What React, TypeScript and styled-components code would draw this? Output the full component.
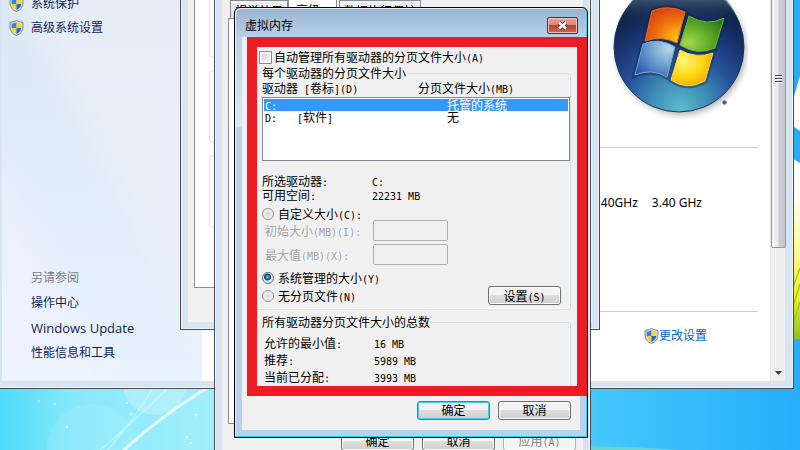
import React from 'react';
import styled, { createGlobalStyle, css } from 'styled-components';

const GlobalStyle = createGlobalStyle`
  *, *::before, *::after { box-sizing: border-box; }
  body {
    margin: 0;
    font-family: "Noto Sans", "Noto Sans CJK SC", sans-serif;
    font-size: 12px;
    color: #000;
  }
  button, input { font: inherit; color: inherit; }
  ul, dl, dd { margin: 0; padding: 0; list-style: none; }
`;

/* ---------- desktop ---------- */

const Desktop = styled.main`
  position: relative;
  height: 100vh;
  overflow: hidden;
  background: #33b8fb;
`;

const WallpaperArt = styled.svg`
  display: block;
  width: 100%;
  height: 100%;
`;

const Wallpaper = () => (
  <WallpaperArt viewBox="0 0 800 450" preserveAspectRatio="xMidYMid slice" aria-hidden="true">
    <defs>
      <linearGradient id="sea" x1="0" x2="1" y1="0" y2="0">
        <stop offset="0" stopColor="#4ddcfa" />
        <stop offset="0.09" stopColor="#86e8fa" />
        <stop offset="0.26" stopColor="#a2eefa" />
        <stop offset="0.72" stopColor="#47cafb" />
        <stop offset="1" stopColor="#26adfb" />
      </linearGradient>
      <linearGradient id="grass" x1="0" x2="0" y1="0" y2="1">
        <stop offset="0" stopColor="#fffde8" />
        <stop offset="0.4" stopColor="#fcf98a" />
        <stop offset="0.7" stopColor="#f0ee28" />
        <stop offset="1" stopColor="#93bf22" />
      </linearGradient>
    </defs>
    <rect width="800" height="450" fill="url(#sea)" />
    <circle cx="155" cy="383" r="32" fill="#d0f8fd" opacity="0.4" />
    <circle cx="92" cy="450" r="46" fill="#b9f3fc" opacity="0.2" />
    <path d="M214 384Q160 416 122 452" stroke="#f2feff" strokeWidth="3" fill="none" opacity="0.85" />
    <path d="M170 386Q138 418 98 452M154 386Q134 420 106 452" stroke="#dcfaff" strokeWidth="1.5" fill="none" opacity="0.5" />
    <g fill="#effeff">
      <circle cx="131" cy="414" r="1.4" /><circle cx="196" cy="415" r="1.4" />
      <circle cx="39" cy="401" r="1.2" opacity="0.7" /><circle cx="55" cy="404" r="1.2" opacity="0.8" />
      <circle cx="67" cy="427" r="1" /><circle cx="127" cy="403" r="1.2" opacity="0.6" />
      <circle cx="137" cy="438" r="1" /><circle cx="187" cy="437" r="1" /><circle cx="191" cy="443" r="1" />
    </g>
    <rect x="790" width="10" height="340" fill="#29acf3" />
    <path d="M790 110L800 76V131L790 124Z" fill="#fff" />
    <path d="M790 157L800 163V230H790Z" fill="#fff" />
    <rect x="790" y="200" width="10" height="139" fill="url(#grass)" />
    <path d="M792 290L800 268M792 310L800 284M792 328L800 302" stroke="#a5c828" strokeWidth="1.5" />
    <path d="M590 446Q640 447 680 450H590Z" fill="#67d5d5" />
  </WallpaperArt>
);

/* ---------- window chrome ---------- */

const Frame = styled.section`
  position: absolute;
  display: flex;
  border: 1px solid #4b4b4b;
  background: #d7e4f2;
  box-shadow: inset 0 0 0 1px #f0f5fa;
  padding: 7px;
`;

const SystemFrame = styled(Frame)`
  inset: -8px 6px 61px -6px;
  padding-right: 8px;
`;

const PropertiesFrame = styled(Frame)`
  left: 180px;
  top: -42px;
  width: 420px;
  bottom: 120px;
`;

const PerformanceFrame = styled(Frame)`
  left: 214px;
  top: -22px;
  width: 377px;
  bottom: -20px;
`;

const SheetBody = styled.div`
  flex: 1;
  display: flex;
  flex-direction: column;
  min-width: 0;
  background: #f0f0f0;
`;

/* ---------- shared controls ---------- */

const Half = styled.span`
  font-family: "DejaVu Sans Mono", monospace;
  font-size: 10px;
  line-height: 0;
  white-space: pre;
`;

/* Latin runs sit in half-width cells beside full-width characters. */
const Cells = ({ text }: { text: string }) => (
  <>
    {text.split(/([\x20-\x7e]+)/).filter(Boolean).map((part, i) =>
      /^[\x20-\x7e]/.test(part) ? <Half key={i}>{part}</Half> : <React.Fragment key={i}>{part}</React.Fragment>,
    )}
  </>
);

const PushButton = styled.button<{ $primary?: boolean }>`
  width: 73px;
  height: 19px;
  flex: none;
  padding: 0;
  line-height: 16px;
  border: 1px solid #707070;
  border-radius: 3px;
  background: linear-gradient(#f3f3f3 0 45%, #dddddd 50%, #cfcfcf);
  box-shadow: inset 0 0 0 1px #fafafa;
  ${(p) => p.$primary && css`
    border-color: #3c7fb1;
    box-shadow: inset 0 0 0 1px #3fd0f6;
  `}
  &:disabled {
    color: #838383;
    border-color: #adb2b5;
    background: #f4f4f4;
  }
`;

const Shield = () => (
  <svg width="15" height="16" viewBox="0 0 15 16" aria-hidden="true">
    <path d="M7.500 .5Q10.500 2.200 14 2.300V7Q14 13 7.500 15.600Q1 13 1 7V2.300Q4.500 2.200 7.500 .5Z" fill="#d9dcde" stroke="#85888c" />
    <path d="M7.500 2.300Q5.500 3.600 2.700 3.700V8H7.500Z" fill="#2d86dc" />
    <path d="M7.500 2.300Q9.500 3.600 12.300 3.700V8H7.500Z" fill="#fbd52a" />
    <path d="M2.700 8Q3.300 12 7.500 14V8Z" fill="#fad12b" />
    <path d="M12.300 8Q11.700 12 7.500 14V8Z" fill="#1b6fc9" />
  </svg>
);

/* ---------- system window ---------- */

const Sidebar = styled.nav`
  flex: none;
  width: 200px;
  display: flex;
  flex-direction: column;
  justify-content: space-between;
  padding: 0 0 16px 7px;
  background:
    linear-gradient(62deg, #f0f3ff99 0 22%, transparent 34%),
    linear-gradient(242deg, #ecf0f9aa 0 40%, transparent 52%),
    linear-gradient(#dbe7f4, #e0ecf8 45%, #e8f2fe);
`;

const TopLinks = styled.div`
  display: flex;
  flex-direction: column;
  margin-top: -8px;
`;

const SideLink = styled.a`
  display: flex;
  align-items: center;
  gap: 7px;
  line-height: 24px;
  color: #151c55;
  text-decoration: none;
`;

const SeeAlso = styled.div`
  display: flex;
  flex-direction: column;
  gap: 1px;
  padding-left: 22px;
`;

const SeeAlsoTitle = styled.div`
  line-height: 24px;
  color: #7b7f86;
`;

const UpdateLink = styled(SideLink)`
  font-family: "Open Sans", sans-serif;
  font-size: 13px;
`;

const Content = styled.div`
  flex: 1;
  display: flex;
  flex-direction: column;
  align-items: flex-end;
  padding-right: 12px;
  background: #fff;
`;

const LogoRow = styled.div`
  height: 148px;
  width: 100%;
  display: flex;
  justify-content: flex-end;
  padding-right: 10px;
  border-bottom: 1px solid #cbcbcb;
`;

const Specs = styled.div`
  width: 100%;
  height: 164px;
  display: flex;
  justify-content: flex-end;
  gap: 14px;
  padding: 46px 56px 0 0;
  line-height: 18px;
  border-bottom: 1px solid #cbcbcb;
`;

const ChangeLink = styled.a`
  display: flex;
  align-items: center;
  margin: 15px 51px 0 0;
  line-height: 18px;
  color: #0066cc;
  text-decoration: none;
`;

const ScrollTrack = styled.div`
  flex: none;
  width: 15px;
  display: flex;
  flex-direction: column;
  justify-content: space-between;
  align-items: center;
  background: #efefef;
  border-left: 1px solid #e4e4e4;
`;

const ScrollThumb = styled.div`
  width: 15px;
  height: 65%;
  display: flex;
  justify-content: center;
  padding-top: 75px;
  border: 1px solid #979797;
  border-top: 0;
  border-radius: 0 0 2px 2px;
  background: linear-gradient(90deg, #f5f5f5, #e8e8eb 45%, #cfcfd3 55%, #c5c5ca);
`;

const ScrollArrow = styled.svg`
  margin-bottom: 6px;
`;

const Orb = () => (
  <svg width="140" height="122" viewBox="608 0 140 122" role="img" aria-label="Windows">
    <defs>
      <radialGradient id="orb" gradientUnits="userSpaceOnUse" cx="680" cy="108" r="112">
        <stop offset="0" stopColor="#5cb9cd" />
        <stop offset="0.25" stopColor="#3f8fb8" />
        <stop offset="0.5" stopColor="#27529b" />
        <stop offset="0.75" stopColor="#18326e" />
        <stop offset="1" stopColor="#0c1d3d" />
      </radialGradient>
      <linearGradient id="gloss" x1="0" x2="0" y1="0" y2="1">
        <stop offset="0" stopColor="#66839a" />
        <stop offset="1" stopColor="#15294d" stopOpacity="0" />
      </linearGradient>
      <radialGradient id="red" cx="0.8" cy="0.85" r="1">
        <stop offset="0" stopColor="#fbc512" /><stop offset="0.5" stopColor="#f0720f" /><stop offset="1" stopColor="#d23b0f" />
      </radialGradient>
      <radialGradient id="green" cx="0.2" cy="0.75" r="0.95">
        <stop offset="0" stopColor="#a6d64c" /><stop offset="0.5" stopColor="#5fac29" /><stop offset="1" stopColor="#2a7418" />
      </radialGradient>
      <radialGradient id="blue" cx="0.85" cy="0.2" r="1">
        <stop offset="0" stopColor="#b4d9e8" /><stop offset="0.5" stopColor="#6b9fcd" /><stop offset="1" stopColor="#2757a8" />
      </radialGradient>
      <radialGradient id="yellow" cx="0.3" cy="0.3" r="0.9">
        <stop offset="0" stopColor="#fff57a" /><stop offset="0.5" stopColor="#fdd710" /><stop offset="1" stopColor="#f0960e" />
      </radialGradient>
      <filter id="shade" x="-20%" y="-20%" width="140%" height="140%"><feGaussianBlur stdDeviation="3" /></filter>
    </defs>
    <circle cx="681" cy="50" r="65" fill="#777" opacity="0.55" filter="url(#shade)" />
    <circle cx="679" cy="47" r="65" fill="url(#orb)" stroke="#17365f" />
    <path d="M618 25Q632 -8 650 -12H710Q732 -2 740 25Q680 10 618 25Z" fill="url(#gloss)" />
    <g stroke="#10234a" strokeWidth="5" strokeOpacity="0.45" fill="none">
      <path d="M652 11Q668 4 685 12L677 43Q661 35 645 41Z" />
      <path d="M689 16Q707 27 724 18L715 48Q697 56 680 45Z" />
      <path d="M643 44Q659 37 675 47L667 77Q651 68 635 75Z" />
      <path d="M680 50Q696 59 713 53L705 81Q687 91 671 80Z" />
    </g>
    <path d="M652 11Q668 4 685 12L677 43Q661 35 645 41Z" fill="url(#red)" stroke="#f26b21" />
    <path d="M689 16Q707 27 724 18L715 48Q697 56 680 45Z" fill="url(#green)" stroke="#6fb936" />
    <path d="M643 44Q659 37 675 47L667 77Q651 68 635 75Z" fill="url(#blue)" stroke="#75a8d6" />
    <path d="M680 50Q696 59 713 53L705 81Q687 91 671 80Z" fill="url(#yellow)" stroke="#fbd545" />
    <circle cx="724.500" cy="102.500" r="2" fill="#555" stroke="#999" strokeWidth=".6" />
  </svg>
);

const SystemWindow = () => (
  <SystemFrame aria-label="系统">
    <Sidebar>
      <TopLinks>
        <SideLink href="#protect"><Shield />系统保护</SideLink>
        <SideLink href="#advanced"><Shield />高级系统设置</SideLink>
      </TopLinks>
      <SeeAlso>
        <SeeAlsoTitle>另请参阅</SeeAlsoTitle>
        <SideLink href="#action">操作中心</SideLink>
        <UpdateLink href="#update">Windows Update</UpdateLink>
        <SideLink href="#tools">性能信息和工具</SideLink>
      </SeeAlso>
    </Sidebar>
    <Content>
      <LogoRow><Orb /></LogoRow>
      <Specs><span>40GHz</span><span>3.40 GHz</span></Specs>
      <ChangeLink href="#change"><Shield />更改设置</ChangeLink>
    </Content>
    <ScrollTrack>
      <ScrollThumb>
        <svg width="7" height="9" viewBox="0 0 7 9" aria-hidden="true">
          <path d="M0 .5H7M0 3.500H7M0 6.500H7" stroke="#444" />
          <path d="M0 1.500H7M0 4.500H7M0 7.500H7" stroke="#fff" />
        </svg>
      </ScrollThumb>
      <ScrollArrow width="7" height="4" viewBox="0 0 7 4" aria-hidden="true">
        <path d="M0 0H7L3.500 4Z" fill="#404040" />
      </ScrollArrow>
    </ScrollTrack>
  </SystemFrame>
);

/* ---------- system properties window ---------- */

const PropertiesPanel = styled.div`
  flex: 1;
  display: flex;
  flex-direction: column;
  gap: 12px;
  margin: 11px 6px 34px;
  padding: 7px 14px;
  border: 1px solid #898c95;
  background: #fff;
`;

const EmptyGroup = styled.div`
  height: 73px;
  border: 1px solid #d5dfe5;
  border-radius: 4px;
`;

const PropertiesWindow = () => (
  <PropertiesFrame aria-label="系统属性">
    <SheetBody>
      <PropertiesPanel><EmptyGroup /><EmptyGroup /><EmptyGroup /></PropertiesPanel>
    </SheetBody>
  </PropertiesFrame>
);

/* ---------- performance options window ---------- */

const TabList = styled.div`
  display: flex;
  align-items: flex-end;
  margin: 12px 6px 0 8px;
  height: 20px;
`;

const Tab = styled.button<{ $active?: boolean }>`
  height: ${(p) => (p.$active ? 20 : 18)}px;
  padding: 4px ${(p) => (p.$active ? 16 : 4)}px 0 ${(p) => (p.$active ? 7 : 4)}px;
  border: 1px solid #898c95;
  border-bottom: 0;
  background: ${(p) => (p.$active ? '#fff' : 'linear-gradient(#f2f2f2, #dcdcdc)')};
  line-height: 14px;
  margin-right: ${(p) => (p.$active ? 2 : 0)}px;
`;

const PerformancePanel = styled.div`
  flex: 1;
  margin: 0 6px;
  border: 1px solid #898c95;
  background: #fff;
`;

const SheetButtons = styled.div`
  display: flex;
  justify-content: flex-end;
  gap: 8px;
  padding: 8px 7px 11px;
`;

const PerformanceWindow = () => (
  <PerformanceFrame aria-label="性能选项">
    <SheetBody>
      <TabList role="tablist">
        <Tab role="tab">视觉效果</Tab>
        <Tab role="tab" aria-selected="true" $active>高级</Tab>
        <Tab role="tab">数据执行保护</Tab>
      </TabList>
      <PerformancePanel />
      <SheetButtons>
        <PushButton>确定</PushButton>
        <PushButton>取消</PushButton>
        <PushButton disabled><Cells text="应用(A)" /></PushButton>
      </SheetButtons>
    </SheetBody>
  </PerformanceFrame>
);

/* ---------- virtual memory dialog ---------- */

const DialogFrame = styled.section`
  position: absolute;
  left: 234px;
  top: 7px;
  width: 354px;
  border: 1px solid #000;
  border-radius: 6px 6px 0 0;
  padding: 0 7px 7px;
  background: linear-gradient(#98b4d2, #bad1ea 30px, #dbe7f5 118px, #b9d1ea 120px);
  box-shadow: inset -1px -1px 0 #35d0f0, inset 1px 1px 0 #e6f0fa;
`;

const TitleBar = styled.header`
  display: flex;
  justify-content: space-between;
  align-items: center;
  height: 29px;
  padding: 6px 2px 0 3px;
`;

const Title = styled.h1`
  margin: 0;
  font-size: 12px;
  font-weight: 400;
  line-height: 18px;
`;

const CloseButton = styled.button`
  display: grid;
  place-items: center;
  width: 31px;
  height: 17px;
  padding: 0;
  border: 1px solid #5b2b2b;
  border-radius: 2px;
  background: linear-gradient(#e5a79b, #d88474 45%, #b8402c 50%, #cb6a52);
  box-shadow: inset 0 0 0 1px #f0c4bb;
`;

const DialogBody = styled.div`
  padding: 13px 9px 10px 8px;
  background: #f0f0f0;
  font-family: "Noto Sans CJK SC", sans-serif;
  line-height: 14px;
  white-space: nowrap;
`;

const Choice = styled.label<{ $short?: boolean }>`
  display: flex;
  align-items: center;
  gap: 4px;
  height: ${(p) => (p.$short ? 12 : 14)}px;
`;

const AutoChoice = styled(Choice)`
  gap: 2px;
  margin: 0 0 2px 9px;
`;

const CheckBox = styled.input`
  appearance: none;
  flex: none;
  width: 13px;
  height: 13px;
  margin: 0;
  border: 1px solid #8e8f8f;
  background: linear-gradient(135deg, #cbcfd5, #f6f6f6);
  box-shadow: inset 0 0 0 2px #f4f4f4;
`;

const RadioButton = styled.input`
  appearance: none;
  flex: none;
  width: 12px;
  height: 12px;
  margin: 0;
  border: 1px solid #8e8f8f;
  border-radius: 50%;
  background: radial-gradient(circle, #d4d7da, #f4f4f4 70%);
  &:checked {
    border-color: #4b6a83;
    background: radial-gradient(circle at 45% 40%, #7fdcfb 0, #1c6fa3 2px, #0d3a5c 3px, #e6eef3 4px);
  }
`;

const Group = styled.fieldset`
  min-width: 0;
  margin: 0 0 5px;
  padding: 1px 0 4px 11px;
  border: 1px solid #d5dfe5;
  border-radius: 3px;
  box-shadow: inset -1px -1px 0 #fff;
`;

const Legend = styled.legend`
  margin-left: -2px;
  padding: 0 2px;
  line-height: 14px;
`;

const ListHeader = styled.div`
  display: grid;
  grid-template-columns: 156px 1fr;
`;

const DriveList = styled.ul`
  height: 64px;
  margin: 2px 0 13px;
  padding: 1px;
  border: 1px solid #828790;
  background: #fff;
`;

const DriveRow = styled.li<{ $selected?: boolean }>`
  display: grid;
  grid-template-columns: 32px 150px 1fr;
  padding-left: 1px;
  line-height: 12px;
  background: ${(p) => (p.$selected ? '#3399ff' : 'transparent')};
  color: ${(p) => (p.$selected ? '#fff' : '#000')};
`;

const Facts = styled.dl<{ $row?: number }>`
  display: grid;
  grid-template-columns: 110px 1fr;
  grid-auto-rows: ${(p) => p.$row ?? 14}px;
  align-items: center;
`;

const Totals = styled(Facts)`
  padding: 4px 0 0 2px;
`;

const CustomSize = styled.div`
  margin: 6px 0;
`;

const SizeField = styled.label`
  display: grid;
  grid-template-columns: 108px 75px;
  align-items: center;
  padding-left: 3px;
  color: #a0a0a0;
  text-shadow: 1px 1px 0 #fff;
  & + & { margin-top: 3px; }
`;

const SizeInput = styled.input`
  min-width: 0;
  height: 21px;
  padding: 2px 4px;
  border: 1px solid #afafaf;
  border-radius: 2px;
  background: #f0f0f0;
`;

const ModeRow = styled.div`
  display: flex;
  justify-content: space-between;
  align-items: flex-end;
  padding-right: 9px;
`;

const ModeChoices = styled.div`
  display: flex;
  flex-direction: column;
  gap: 4px;
  padding-bottom: 2px;
`;

const DialogButtons = styled.div`
  display: flex;
  justify-content: flex-end;
  gap: 8px;
  padding-top: 6px;
  font-family: "Noto Sans", "Noto Sans CJK SC", sans-serif;
`;

const Highlight = styled.div`
  position: absolute;
  inset: 29px 0 41px 12px;
  border: 10px solid #ed1c24;
  pointer-events: none;
`;

const drives = [
  { name: 'C:', label: '', size: '托管的系统' },
  { name: 'D:', label: '[软件]', size: '无' },
];

const totals = [
  ['允许的最小值:', '16 MB'],
  ['推荐:', '5989 MB'],
  ['当前已分配:', '3993 MB'],
];

const VirtualMemoryDialog = () => (
  <DialogFrame role="dialog" aria-label="虚拟内存">
    <TitleBar>
      <Title>虚拟内存</Title>
      <CloseButton aria-label="关闭">
        <svg width="11" height="9" viewBox="0 0 11 9" aria-hidden="true">
          <path d="M2 1.500L9 7.500M9 1.500L2 7.500" stroke="#5a3a3a" strokeWidth="4" />
          <path d="M2 1.500L9 7.500M9 1.500L2 7.500" stroke="#fff" strokeWidth="2.400" />
        </svg>
      </CloseButton>
    </TitleBar>
    <DialogBody>
      <AutoChoice>
        <CheckBox type="checkbox" />
        <span><Cells text="自动管理所有驱动器的分页文件大小(A)" /></span>
      </AutoChoice>
      <Group>
        <Legend>每个驱动器的分页文件大小</Legend>
        <ListHeader>
          <span><Cells text="驱动器 [卷标](D)" /></span>
          <span><Cells text="分页文件大小(MB)" /></span>
        </ListHeader>
        <DriveList role="listbox" aria-label="驱动器">
          {drives.map((d, i) => (
            <DriveRow key={d.name} role="option" aria-selected={i === 0} $selected={i === 0}>
              <span><Cells text={d.name} /></span>
              <span><Cells text={d.label} /></span>
              <span>{d.size}</span>
            </DriveRow>
          ))}
        </DriveList>
        <Facts>
          <dt><Cells text="所选驱动器:" /></dt><dd><Cells text="C:" /></dd>
          <dt><Cells text="可用空间:" /></dt><dd><Cells text="22231 MB" /></dd>
        </Facts>
        <CustomSize>
          <Choice $short>
            <RadioButton type="radio" name="mode" />
            <span><Cells text="自定义大小(C):" /></span>
          </Choice>
          <SizeField><span><Cells text="初始大小(MB)(I):" /></span><SizeInput disabled /></SizeField>
          <SizeField><span><Cells text="最大值(MB)(X):" /></span><SizeInput disabled /></SizeField>
        </CustomSize>
        <ModeRow>
          <ModeChoices>
            <Choice>
              <RadioButton type="radio" name="mode" defaultChecked />
              <span><Cells text="系统管理的大小(Y)" /></span>
            </Choice>
            <Choice>
              <RadioButton type="radio" name="mode" />
              <span><Cells text="无分页文件(N)" /></span>
            </Choice>
          </ModeChoices>
          <PushButton><Cells text="设置(S)" /></PushButton>
        </ModeRow>
      </Group>
      <Group>
        <Legend>所有驱动器分页文件大小的总数</Legend>
        <Totals $row={17}>
          {totals.map(([name, value]) => (
            <React.Fragment key={name}>
              <dt><Cells text={name} /></dt><dd><Cells text={value} /></dd>
            </React.Fragment>
          ))}
        </Totals>
      </Group>
      <DialogButtons>
        <PushButton $primary>确定</PushButton>
        <PushButton>取消</PushButton>
      </DialogButtons>
    </DialogBody>
    <Highlight />
  </DialogFrame>
);

export default function App() {
  return (
    <>
      <GlobalStyle />
      <Desktop>
        <Wallpaper />
        <SystemWindow />
        <PropertiesWindow />
        <PerformanceWindow />
        <VirtualMemoryDialog />
      </Desktop>
    </>
  );
}
